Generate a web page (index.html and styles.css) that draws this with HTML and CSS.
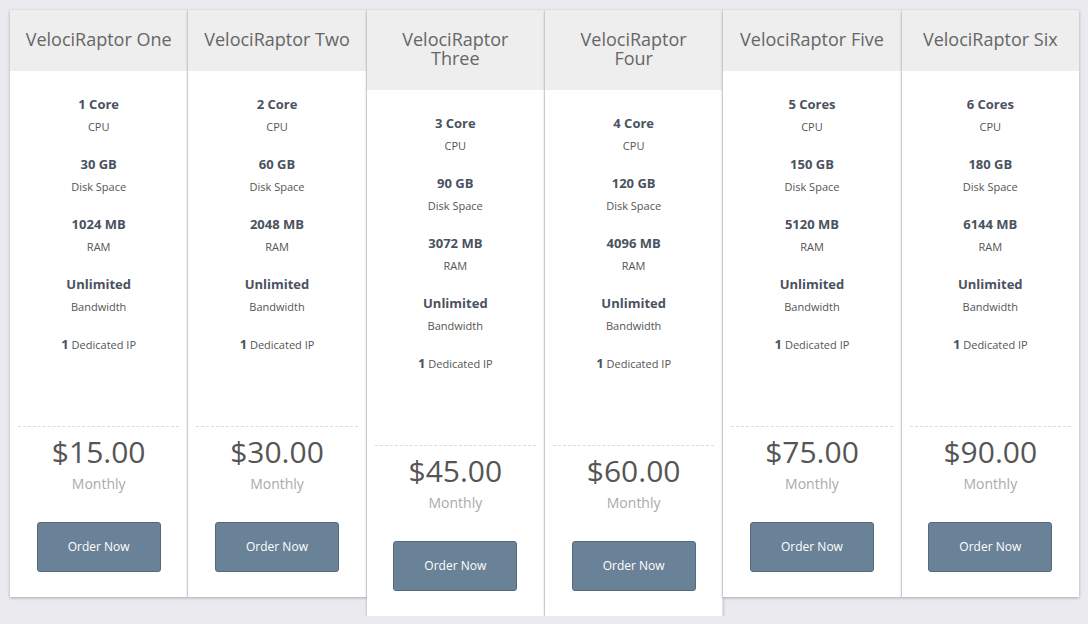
FILE: index.html
```html
<!DOCTYPE html>
<html>
<head>
<meta charset="utf-8">
<link rel="stylesheet" href="styles.css">
</head>
<body>
<div class="plans">
  <div class="card">
    <div class="head">VelociRaptor One</div>
    <div class="body">
      <div class="feat"><b>1 Core</b><span>CPU</span></div>
      <div class="feat"><b>30 GB</b><span>Disk Space</span></div>
      <div class="feat"><b>1024 MB</b><span>RAM</span></div>
      <div class="feat"><b>Unlimited</b><span>Bandwidth</span></div>
      <div class="ip"><b>1</b> Dedicated IP</div>
    </div>
    <div class="price">$15.00</div>
    <div class="cycle">Monthly</div>
    <div class="btnwrap"><a class="btn">Order Now</a></div>
  </div>
  <div class="card">
    <div class="head">VelociRaptor Two</div>
    <div class="body">
      <div class="feat"><b>2 Core</b><span>CPU</span></div>
      <div class="feat"><b>60 GB</b><span>Disk Space</span></div>
      <div class="feat"><b>2048 MB</b><span>RAM</span></div>
      <div class="feat"><b>Unlimited</b><span>Bandwidth</span></div>
      <div class="ip"><b>1</b> Dedicated IP</div>
    </div>
    <div class="price">$30.00</div>
    <div class="cycle">Monthly</div>
    <div class="btnwrap"><a class="btn">Order Now</a></div>
  </div>
  <div class="card">
    <div class="head"><span class="line">VelociRaptor</span><span class="line">Three</span></div>
    <div class="body">
      <div class="feat"><b>3 Core</b><span>CPU</span></div>
      <div class="feat"><b>90 GB</b><span>Disk Space</span></div>
      <div class="feat"><b>3072 MB</b><span>RAM</span></div>
      <div class="feat"><b>Unlimited</b><span>Bandwidth</span></div>
      <div class="ip"><b>1</b> Dedicated IP</div>
    </div>
    <div class="price">$45.00</div>
    <div class="cycle">Monthly</div>
    <div class="btnwrap"><a class="btn">Order Now</a></div>
  </div>
  <div class="card">
    <div class="head"><span class="line">VelociRaptor</span><span class="line">Four</span></div>
    <div class="body">
      <div class="feat"><b>4 Core</b><span>CPU</span></div>
      <div class="feat"><b>120 GB</b><span>Disk Space</span></div>
      <div class="feat"><b>4096 MB</b><span>RAM</span></div>
      <div class="feat"><b>Unlimited</b><span>Bandwidth</span></div>
      <div class="ip"><b>1</b> Dedicated IP</div>
    </div>
    <div class="price">$60.00</div>
    <div class="cycle">Monthly</div>
    <div class="btnwrap"><a class="btn">Order Now</a></div>
  </div>
  <div class="card">
    <div class="head">VelociRaptor Five</div>
    <div class="body">
      <div class="feat"><b>5 Cores</b><span>CPU</span></div>
      <div class="feat"><b>150 GB</b><span>Disk Space</span></div>
      <div class="feat"><b>5120 MB</b><span>RAM</span></div>
      <div class="feat"><b>Unlimited</b><span>Bandwidth</span></div>
      <div class="ip"><b>1</b> Dedicated IP</div>
    </div>
    <div class="price">$75.00</div>
    <div class="cycle">Monthly</div>
    <div class="btnwrap"><a class="btn">Order Now</a></div>
  </div>
  <div class="card">
    <div class="head">VelociRaptor Six</div>
    <div class="body">
      <div class="feat"><b>6 Cores</b><span>CPU</span></div>
      <div class="feat"><b>180 GB</b><span>Disk Space</span></div>
      <div class="feat"><b>6144 MB</b><span>RAM</span></div>
      <div class="feat"><b>Unlimited</b><span>Bandwidth</span></div>
      <div class="ip"><b>1</b> Dedicated IP</div>
    </div>
    <div class="price">$90.00</div>
    <div class="cycle">Monthly</div>
    <div class="btnwrap"><a class="btn">Order Now</a></div>
  </div>
</div>
</body>
</html>
```

FILE: styles.css
```css
html, body {
  margin: 0;
  padding: 0;
  background: #ebebef;
  font-family: "Open Sans", "Liberation Sans", sans-serif;
}
.plans {
  display: flex;
  align-items: flex-start;
  padding: 10px 9px 0 10px;
}
.card {
  flex: 1 1 0;
  min-width: 0;
  background: #fff;
  border-right: 1px solid #e2e2e2;
  box-shadow: 0 1px 3px rgba(0, 0, 0, 0.28);
  text-align: center;
  padding-bottom: 25px;
}
.card:last-child {
  border-right: none;
}
.head {
  background: #eeeeee;
  color: #666;
  font-size: 18px;
  line-height: 19px;
  padding: 20px 4px 22px;
}
.head .line {
  display: block;
}
.body {
  padding: 23px 8px 0;
}
.feat {
  margin-bottom: 18px;
}
.feat b {
  display: block;
  font-size: 13px;
  line-height: 20px;
  font-weight: 700;
  color: #4a5260;
}
.feat span {
  display: block;
  font-size: 11px;
  line-height: 18px;
  margin-top: 4px;
  color: #555;
}
.ip {
  font-size: 11px;
  line-height: 20px;
  color: #555;
}
.ip b {
  font-size: 13px;
  color: #4a5260;
}
.price {
  margin: 71px 8px 0;
  border-top: 1px dashed #dcdcdc;
  padding-top: 7px;
  font-size: 30px;
  line-height: 36px;
  color: #555;
}
.cycle {
  margin-top: 4px;
  font-size: 14px;
  line-height: 20px;
  color: #aaa;
}
.btnwrap {
  margin-top: 28px;
  display: flex;
  justify-content: center;
}
.btn {
  display: block;
  box-sizing: border-box;
  width: 124px;
  height: 50px;
  line-height: 48px;
  background: #6a8298;
  border: 1px solid #56687a;
  border-radius: 3px;
  color: #fff;
  font-size: 12px;
}
```
